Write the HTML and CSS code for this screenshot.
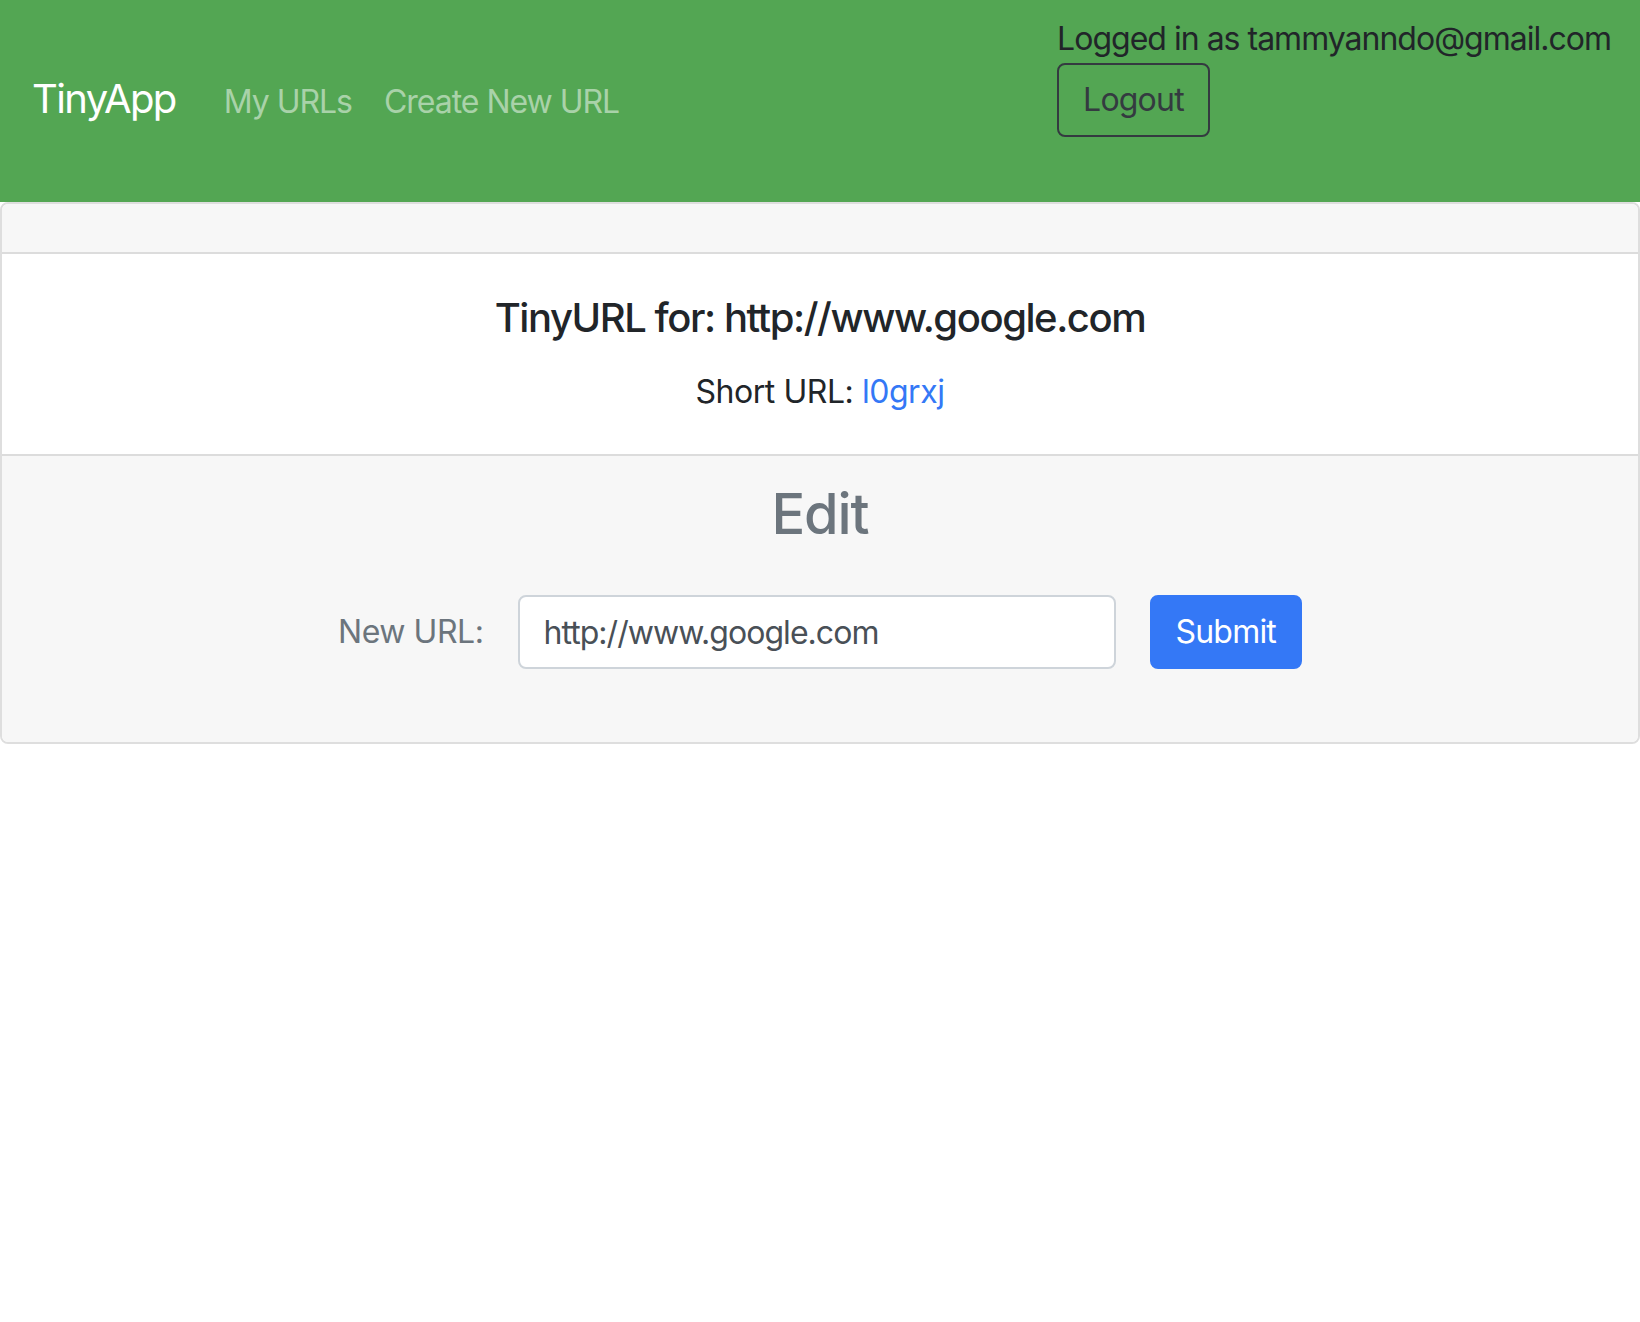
FILE: index.html
```html
<!DOCTYPE html>
<html lang="en">
<head>
<meta charset="utf-8">
<title>TinyApp</title>
<link rel="stylesheet" href="styles.css">
</head>
<body>
<nav class="navbar">
  <div class="nav-left">
    <a class="brand" href="#">TinyApp</a>
    <a class="nav-link" href="#">My URLs</a>
    <a class="nav-link" href="#">Create New URL</a>
  </div>
  <div class="nav-right">
    <div class="logged">Logged in as tammyanndo@gmail.com</div>
    <button class="btn-logout" type="button">Logout</button>
  </div>
</nav>
<div class="card">
  <div class="card-header"></div>
  <div class="card-body">
    <h5 class="card-title">TinyURL for: http://www.google.com</h5>
    <p class="card-text">Short URL: <a class="short-link" href="#">l0grxj</a></p>
  </div>
  <div class="card-footer">
    <h3 class="edit-title">Edit</h3>
    <form class="edit-form">
      <label class="edit-label" for="newurl">New URL:</label>
      <input class="edit-input" id="newurl" type="text" value="http://www.google.com">
      <button class="btn-submit" type="button">Submit</button>
    </form>
  </div>
</div>
</body>
</html>
```

FILE: styles.css
```css
* { box-sizing: border-box; }
body {
  margin: 0;
  font-family: Inter, "Noto Sans", "Liberation Sans", sans-serif;
  letter-spacing: -0.028em;
  color: #212529;
  background: #fff;
}
.navbar {
  height: 202px;
  background: #53a653;
  display: flex;
  align-items: flex-start;
  padding: 0 29px 0 32px;
}
.nav-left {
  display: flex;
  align-items: baseline;
  margin-top: 59px;
}
.brand {
  font-size: 40px;
  line-height: 60px;
  padding: 10px 0;
  margin-right: 32px;
  letter-spacing: -0.04em;
  color: #fff;
  text-decoration: none;
}
.nav-link {
  font-size: 32px;
  line-height: 48px;
  padding: 0 16px;
  letter-spacing: -0.032em;
  color: #a9d2a9;
  text-decoration: none;
}
.nav-right {
  margin-left: auto;
  padding-top: 15px;
  display: flex;
  flex-direction: column;
  align-items: flex-start;
}
.logged {
  font-size: 32px;
  line-height: 48px;
  letter-spacing: -0.031em;
  color: #212529;
}
.btn-logout {
  margin-top: 0;
  font-family: inherit;
  letter-spacing: -0.025em;
  font-size: 32px;
  line-height: 48px;
  height: 74px;
  padding: 0 24px;
  border: 2px solid #343a40;
  border-radius: 8px;
  background: transparent;
  color: #343a40;
}
.card {
  border: 2px solid #dedede;
  border-radius: 8px;
  background: #fff;
  overflow: hidden;
}
.card-header {
  height: 50px;
  background: #f7f7f7;
  border-bottom: 2px solid #dcdcdc;
}
.card-body {
  padding: 40px 40px 38px;
  text-align: center;
}
.card-title {
  margin: 0 0 26px;
  font-size: 40px;
  line-height: 48px;
  font-weight: 500;
  letter-spacing: -0.036em;
  color: #212529;
}
.card-text {
  margin: 0;
  font-size: 32px;
  line-height: 48px;
}
.short-link {
  color: #3478f6;
  text-decoration: none;
}
.card-footer {
  background: #f7f7f7;
  border-top: 2px solid #dcdcdc;
  padding: 25px 40px 24px;
  text-align: center;
}
.edit-title {
  margin: 0;
  font-size: 56px;
  line-height: 67px;
  font-weight: 500;
  letter-spacing: -0.02em;
  color: #6c757d;
}
.edit-form {
  display: flex;
  justify-content: center;
  align-items: center;
  gap: 34px;
  margin: 47px 0 49px;
}
.edit-label {
  font-size: 32px;
  line-height: 48px;
  color: #6c757d;
}
.edit-input {
  width: 598px;
  height: 74px;
  padding: 0 24px;
  font-family: inherit;
  font-size: 32px;
  letter-spacing: -0.03em;
  color: #495057;
  background: #fff;
  border: 2px solid #ced4da;
  border-radius: 8px;
}
.btn-submit {
  height: 74px;
  padding: 0 24px;
  font-family: inherit;
  font-size: 32px;
  line-height: 48px;
  letter-spacing: -0.025em;
  color: #fff;
  background: #3478f6;
  border: 2px solid #3478f6;
  border-radius: 8px;
}
```
